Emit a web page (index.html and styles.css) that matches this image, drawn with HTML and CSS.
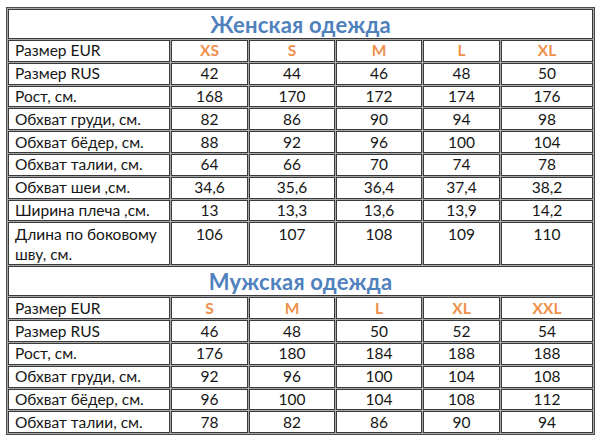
FILE: index.html
```html
<!DOCTYPE html>
<html lang="ru">
<head>
<meta charset="utf-8">
<title>Таблица размеров</title>
<link rel="stylesheet" href="styles.css">
</head>
<body>
<table class="sizes">
  <colgroup>
    <col class="c-label"><col class="c-1"><col class="c-2"><col class="c-3"><col class="c-4"><col class="c-5">
  </colgroup>
  <tbody>
    <tr class="title-row"><td colspan="6" class="title">Женская одежда</td></tr>
    <tr class="size-row"><td class="label">Размер EUR</td><td>XS</td><td>S</td><td>M</td><td>L</td><td>XL</td></tr>
    <tr><td class="label">Размер RUS</td><td>42</td><td>44</td><td>46</td><td>48</td><td>50</td></tr>
    <tr><td class="label">Рост, см.</td><td>168</td><td>170</td><td>172</td><td>174</td><td>176</td></tr>
    <tr><td class="label">Обхват груди, см.</td><td>82</td><td>86</td><td>90</td><td>94</td><td>98</td></tr>
    <tr><td class="label">Обхват бёдер, см.</td><td>88</td><td>92</td><td>96</td><td>100</td><td>104</td></tr>
    <tr><td class="label">Обхват талии, см.</td><td>64</td><td>66</td><td>70</td><td>74</td><td>78</td></tr>
    <tr><td class="label">Обхват шеи ,см.</td><td>34,6</td><td>35,6</td><td>36,4</td><td>37,4</td><td>38,2</td></tr>
    <tr><td class="label">Ширина плеча ,см.</td><td>13</td><td>13,3</td><td>13,6</td><td>13,9</td><td>14,2</td></tr>
    <tr class="tall-row"><td class="label">Длина по боковому шву, см.</td><td>106</td><td>107</td><td>108</td><td>109</td><td>110</td></tr>
    <tr class="title-row"><td colspan="6" class="title">Мужская одежда</td></tr>
    <tr class="size-row"><td class="label">Размер EUR</td><td>S</td><td>M</td><td>L</td><td>XL</td><td>XXL</td></tr>
    <tr><td class="label">Размер RUS</td><td>46</td><td>48</td><td>50</td><td>52</td><td>54</td></tr>
    <tr><td class="label">Рост, см.</td><td>176</td><td>180</td><td>184</td><td>188</td><td>188</td></tr>
    <tr><td class="label">Обхват груди, см.</td><td>92</td><td>96</td><td>100</td><td>104</td><td>108</td></tr>
    <tr><td class="label">Обхват бёдер, см.</td><td>96</td><td>100</td><td>104</td><td>108</td><td>112</td></tr>
    <tr><td class="label">Обхват талии, см.</td><td>78</td><td>82</td><td>86</td><td>90</td><td>94</td></tr>
  </tbody>
</table>
</body>
</html>
```
FILE: styles.css
```css
html, body {
  margin: 0;
  padding: 0;
  background: #ffffff;
}

body {
  padding: 7px 0 0 6px;
  font-family: Lato, "Open Sans", "Liberation Sans", sans-serif;
  color: #161616;
}

.sizes {
  table-layout: fixed;
  width: 589px;
  border-collapse: separate;
  border-spacing: 1px;
  border: 1px solid #4a4a4a;
  background: #a8a8a8;
}

.c-label { width: 162px; }
.c-1 { width: 77px; }
.c-2 { width: 86px; }
.c-3 { width: 86px; }
.c-4 { width: 77px; }
.c-5 { width: 92px; }

.sizes td {
  box-sizing: border-box;
  height: 21.8px;
  padding: 0;
  border: 1px solid #3a3a3a;
  background: #ffffff;
  text-align: center;
  vertical-align: middle;
  font-size: 15.5px;
  line-height: 19px;
  white-space: nowrap;
  overflow: hidden;
}

.sizes td.label {
  text-align: left;
  padding-left: 6px;
  white-space: normal;
}

.title-row td.title {
  height: 30px;
  font-size: 22px;
  font-weight: 700;
  color: #4f81bd;
  letter-spacing: 0.2px;
}

.size-row td {
  color: #f0904a;
  font-weight: 700;
}

.size-row td.label {
  color: #161616;
  font-weight: 400;
}

.tall-row td {
  height: 42px;
  vertical-align: top;
  line-height: 20px;
  padding-top: 1px;
}
```
